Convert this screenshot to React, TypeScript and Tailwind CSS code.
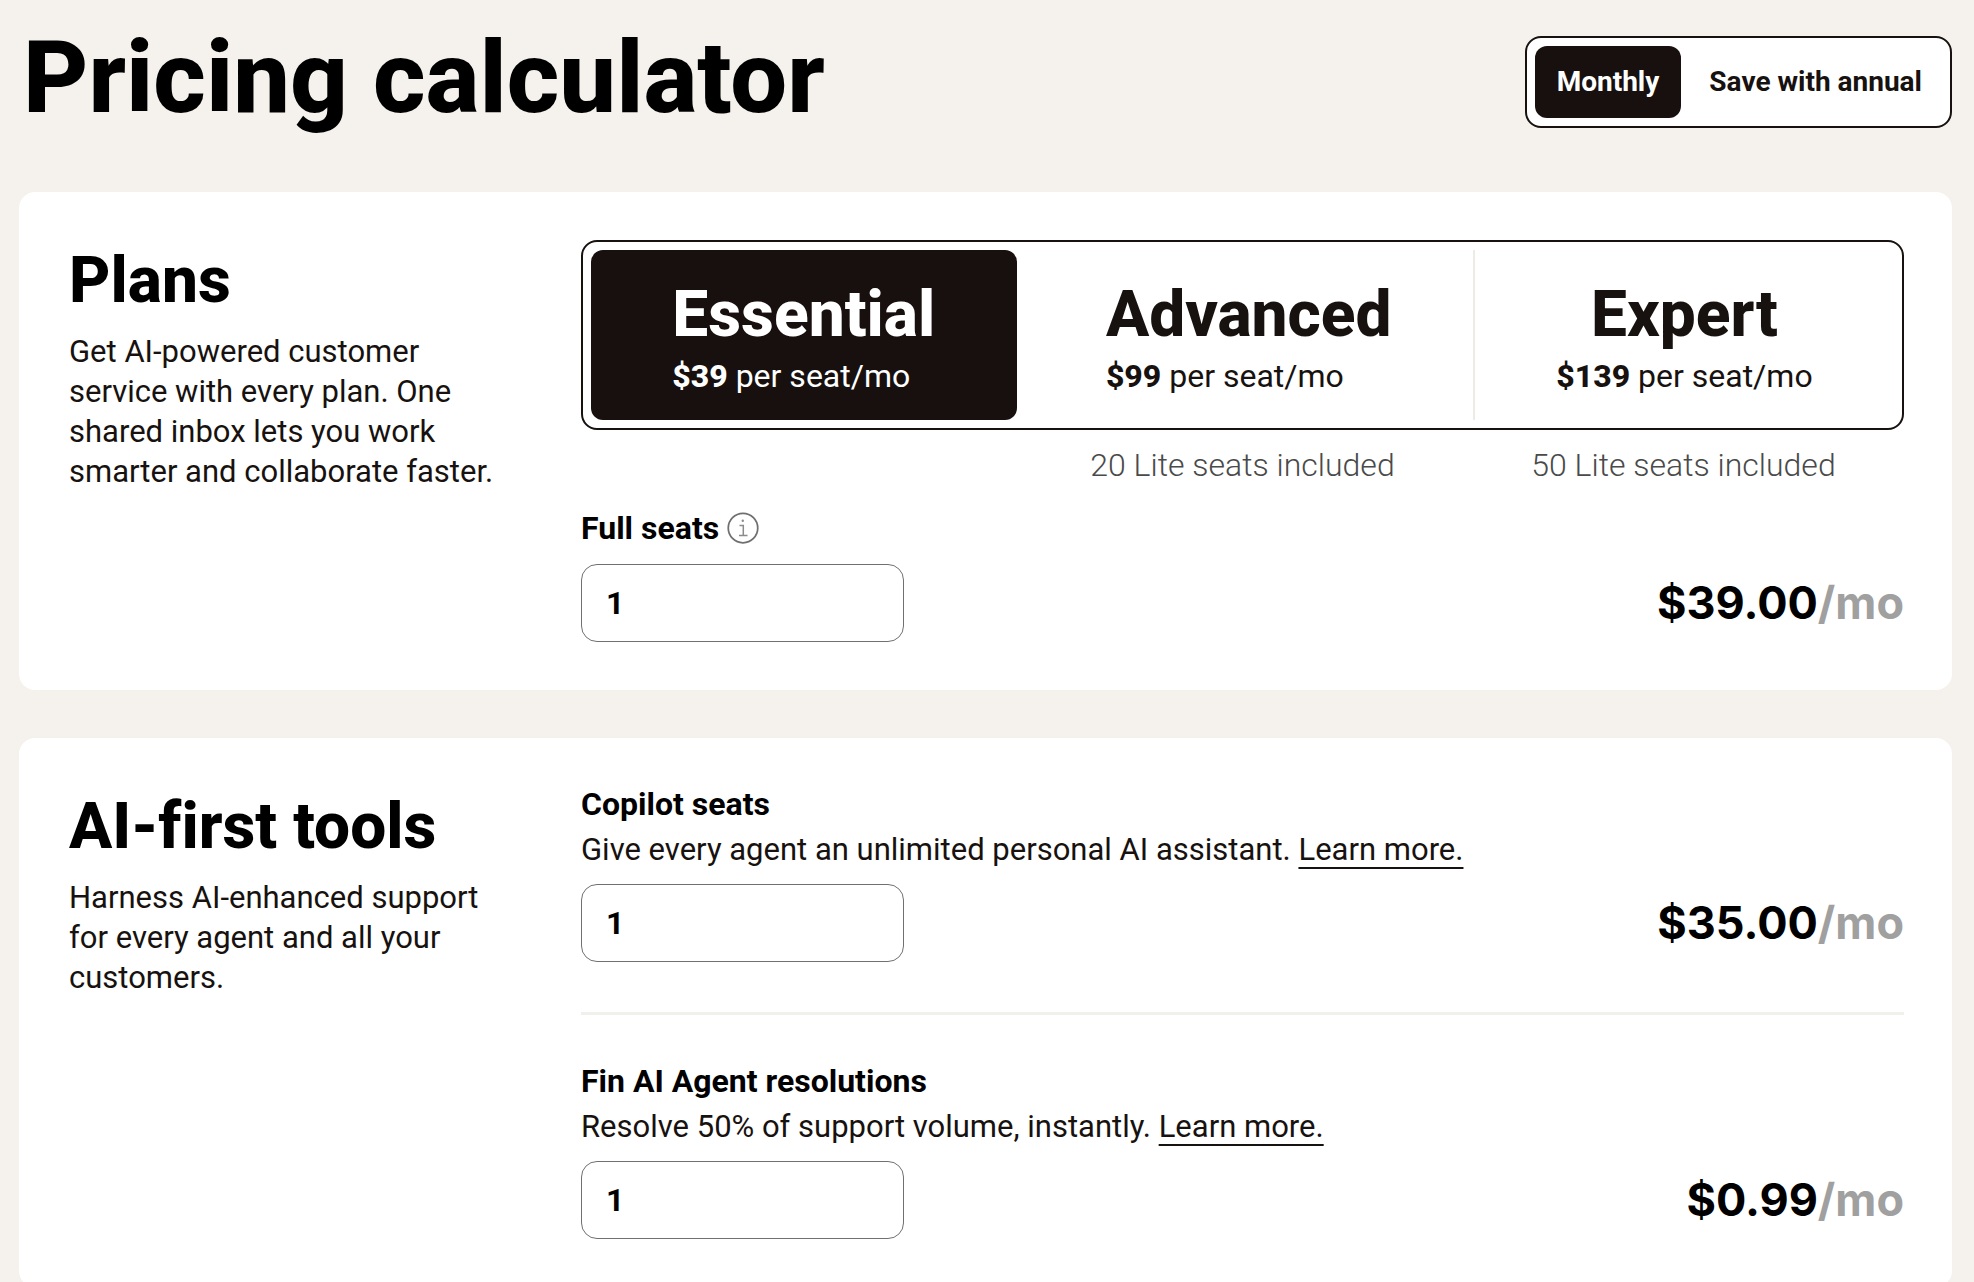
import { useState } from "react";
import type { ReactNode } from "react";

const plans = [
  { name: "Essential", monthly: 39, lite: "" },
  { name: "Advanced", monthly: 99, lite: "20 Lite seats included" },
  { name: "Expert", monthly: 139, lite: "50 Lite seats included" },
];

function InfoIcon() {
  return (
    <svg viewBox="0 0 32 32" className="size-8" fill="none" stroke="#6f6f6f" aria-hidden="true">
      <circle cx="16" cy="16" r="14.75" strokeWidth="1.75" />
      <path d="M12.5 13.5h3.8v10M12 23.5h8.5" strokeWidth="1.5" stroke="#8b8b8b" />
      <circle cx="15.8" cy="8.8" r="1.2" fill="#8b8b8b" stroke="none" />
    </svg>
  );
}

function Price({ amount }: { amount: number }) {
  return (
    <p className="flex h-[78px] items-center font-['Inter',sans-serif] text-[45px] font-bold text-black">
      ${amount.toFixed(2)}
      <span className="text-[#a0a0a0]">/mo</span>
    </p>
  );
}

function SeatField({ id, value, onChange }: { id: string; value: string; onChange: (value: string) => void }) {
  return (
    <input
      id={id}
      type="text"
      inputMode="numeric"
      value={value}
      onChange={(event) => onChange(event.target.value)}
      className="h-[78px] w-[323px] rounded-2xl border border-[#707070] bg-white px-6 text-[32px] font-bold text-black"
    />
  );
}

function Card({ title, text, children }: { title: string; text: string; children: ReactNode }) {
  return (
    <section className="flex rounded-2xl bg-white px-12 py-12">
      <div className="w-[514px] shrink-0 pt-1 pl-[2px]">
        <h2 className="text-[64px] leading-[74px] font-extrabold text-black [font-variant-ligatures:none]">{title}</h2>
        <p className="mt-[14px] w-[430px] text-[31px] leading-10">{text}</p>
      </div>
      <div className="min-w-0 flex-1">{children}</div>
    </section>
  );
}

function Tool({ id, title, text, unit }: { id: string; title: string; text: string; unit: number }) {
  const [value, setValue] = useState("1");
  return (
    <div>
      <label htmlFor={id} className="block text-[32px] leading-9 font-bold text-black">
        {title}
      </label>
      <p className="mt-[6px] text-[31px] leading-[44px]">
        {text}{" "}
        <a href="#learn-more" className="underline decoration-2 underline-offset-[7px]">
          Learn more.
        </a>
      </p>
      <div className="mt-3 flex items-center justify-between">
        <SeatField id={id} value={value} onChange={setValue} />
        <Price amount={(Number(value) || 0) * unit} />
      </div>
    </div>
  );
}

export default function App() {
  const [annual, setAnnual] = useState(false);
  const [selected, setSelected] = useState(0);
  const [seats, setSeats] = useState("1");

  return (
    <main className="bg-[#f5f2ed] pr-[22px] pl-[19px] font-['Roboto',sans-serif] text-[#17120f]">
      <header className="flex h-48 items-start justify-between">
        <h1 className="pt-4 pl-1 text-[101px] leading-[124px] font-extrabold text-black">Pricing calculator</h1>
        <div className="mt-9 flex h-[92px] rounded-2xl border-2 border-[#17120f] bg-white p-2 text-[28px] font-bold">
          <button
            type="button"
            aria-pressed={!annual}
            onClick={() => setAnnual(false)}
            className="rounded-xl px-[22px] aria-pressed:bg-[#17100e] aria-pressed:text-white"
          >
            Monthly
          </button>
          <button
            type="button"
            aria-pressed={annual}
            onClick={() => setAnnual(true)}
            className="ml-1 rounded-xl pr-5 pl-6 aria-pressed:bg-[#17100e] aria-pressed:text-white"
          >
            Save with annual
          </button>
        </div>
      </header>

      <div className="space-y-12">
        <Card
          title="Plans"
          text="Get AI-powered customer service with every plan. One shared inbox lets you work smarter and collaborate faster."
        >
          <div className="flex h-[190px] rounded-2xl border-2 border-[#17120f] bg-white p-2">
            {plans.map((plan, index) => (
              <button
                key={plan.name}
                type="button"
                aria-pressed={selected === index}
                onClick={() => setSelected(index)}
                className="flex flex-auto justify-center rounded-xl pt-7 first:mr-2 aria-pressed:bg-[#17100e] aria-pressed:text-white last:rounded-l-none last:border-l-2 last:border-[#edebe6] last:text-center not-last:text-left"
              >
                <span>
                  <span className="block text-[64px] leading-[74px] font-extrabold">{plan.name}</span>
                  <span className="block text-[32px] leading-[48px]">
                    <b className="font-extrabold">${plan.monthly}</b> per seat/mo
                  </span>
                </span>
              </button>
            ))}
          </div>
          <div className="mt-3 grid h-12 grid-cols-3 text-center text-[32px] leading-[46px] font-light text-[#4a4a4a]">
            {plans.map((plan) => (
              <span key={plan.name}>{plan.lite}</span>
            ))}
          </div>
          <div className="mt-5 flex items-center gap-2">
            <label htmlFor="full-seats" className="text-[32px] leading-9 font-bold text-black">
              Full seats
            </label>
            <button type="button" aria-label="About full seats">
              <InfoIcon />
            </button>
          </div>
          <div className="mt-[18px] flex items-center justify-between">
            <SeatField id="full-seats" value={seats} onChange={setSeats} />
            <Price amount={(Number(seats) || 0) * plans[selected].monthly} />
          </div>
        </Card>

        <Card title="AI-first tools" text="Harness AI-enhanced support for every agent and all your customers.">
          <Tool
            id="copilot"
            title="Copilot seats"
            text="Give every agent an unlimited personal AI assistant."
            unit={35}
          />
          <hr className="mt-[50px] mb-12 border-t-[3px] border-[#f1f0ec]" />
          <Tool
            id="fin"
            title="Fin AI Agent resolutions"
            text="Resolve 50% of support volume, instantly."
            unit={0.99}
          />
        </Card>
      </div>
    </main>
  );
}
